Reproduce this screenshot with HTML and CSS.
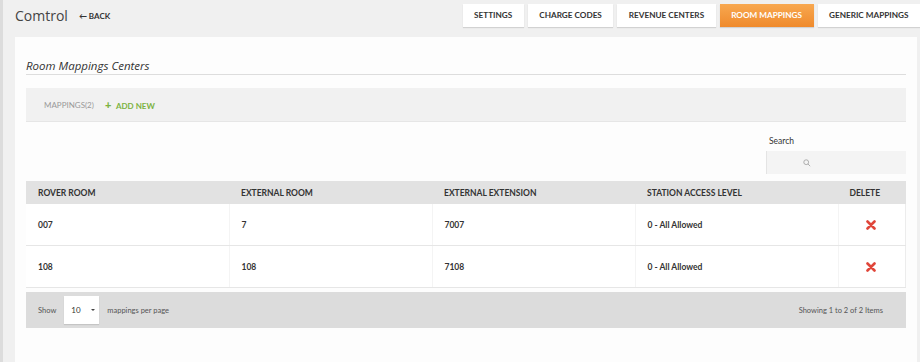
FILE: index.html
```html
<!DOCTYPE html>
<html>
  <head>
    <title>Comtrol - Room Mappings</title>
    <link rel="stylesheet" href="styles.css">
  </head>

  <body>
    <header class="topbar">
      <div class="brand">Comtrol</div>
      <a class="back" href="#">&larr; BACK</a>
      <nav class="tabs">
        <a class="tab" href="#">SETTINGS</a>
        <a class="tab" href="#">CHARGE CODES</a>
        <a class="tab" href="#">REVENUE CENTERS</a>
        <a class="tab active" href="#">ROOM MAPPINGS</a>
        <a class="tab" href="#">GENERIC MAPPINGS</a>
      </nav>
    </header>

    <main class="panel">
      <h2 class="title">Room Mappings Centers</h2>

      <div class="toolbar">
        <span class="count">MAPPINGS(2)</span>
        <a class="add" href="#"><span class="plus">+</span> ADD NEW</a>
      </div>

      <div class="search">
        <label for="q">Search</label>
        <div class="search-box">
          <svg width="8" height="8" viewBox="0 0 10 10">
            <circle cx="4" cy="4" r="3" fill="none" stroke="#aaa" stroke-width="1.2" />
            <line x1="6.3" y1="6.3" x2="9" y2="9" stroke="#aaa" stroke-width="1.2" />
          </svg>
        </div>
      </div>

      <table class="grid">
        <thead>
          <tr>
            <th>ROVER ROOM</th>
            <th>EXTERNAL ROOM</th>
            <th>EXTERNAL EXTENSION</th>
            <th>STATION ACCESS LEVEL</th>
            <th class="del">DELETE</th>
          </tr>
        </thead>
        <tbody>
          <tr>
            <td>007</td>
            <td>7</td>
            <td>7007</td>
            <td>0 - All Allowed</td>
            <td class="del">
              <svg width="10" height="10" viewBox="0 0 10 10">
                <path d="M1.5 1.5 L8.5 8.5 M8.5 1.5 L1.5 8.5" stroke="#e0463a" stroke-width="2.6" stroke-linecap="round" />
              </svg>
            </td>
          </tr>
          <tr>
            <td>108</td>
            <td>108</td>
            <td>7108</td>
            <td>0 - All Allowed</td>
            <td class="del">
              <svg width="10" height="10" viewBox="0 0 10 10">
                <path d="M1.5 1.5 L8.5 8.5 M8.5 1.5 L1.5 8.5" stroke="#e0463a" stroke-width="2.6" stroke-linecap="round" />
              </svg>
            </td>
          </tr>
        </tbody>
      </table>

      <div class="pager">
        <span>Show</span>
        <div class="select">10 <span class="caret"></span></div>
        <span>mappings per page</span>
        <span class="info">Showing 1 to 2 of 2 Items</span>
      </div>
    </main>
  </body>
</html>
```

FILE: styles.css
```css
html, body {
  height: 100%;
}
body {
  margin: 0;
  background: #f0f0f0;
  border-left: 3px solid #dcdcdc;
  font-family: Lato, "Open Sans", sans-serif;
  color: #333;
  display: flex;
  flex-direction: column;
  box-sizing: border-box;
}
a {
  text-decoration: none;
}

.topbar {
  display: flex;
  align-items: center;
  height: 34px;
  padding-left: 12px;
}
.brand {
  font-family: "Open Sans", sans-serif;
  font-size: 14px;
  color: #444;
  margin-top: -3px;
}
.back {
  margin-left: 11px;
  font-size: 8px;
  font-weight: bold;
  color: #333;
  margin-top: -2px;
}
.tabs {
  margin-left: auto;
  align-self: flex-start;
  display: flex;
  gap: 4px;
  padding-top: 4px;
}
.tab {
  display: block;
  height: 23px;
  line-height: 23px;
  padding: 0 11.5px;
  background: #fff;
  box-shadow: 0 1px 1px rgba(0, 0, 0, 0.12);
  font-size: 8.2px;
  font-weight: bold;
  color: #333;
}
.tab.active {
  background: linear-gradient(#f8a850, #ef8a2c);
  color: #fff;
}

.panel {
  flex: 1;
  margin: 3px 3px 0 12px;
  background: #fdfdfd;
  padding: 22px 11px 0;
}
.title {
  margin: 0;
  font-family: "Open Sans", sans-serif;
  font-size: 11.5px;
  font-style: italic;
  font-weight: normal;
  line-height: 14px;
  color: #333;
  padding-bottom: 1px;
  border-bottom: 1px solid #ddd;
}

.toolbar {
  margin-top: 13px;
  height: 34px;
  background: #f1f1f1;
  border-bottom: 1px solid #e6e6e6;
  box-sizing: border-box;
  display: flex;
  align-items: center;
  padding-left: 18px;
  gap: 11px;
  font-size: 8px;
}
.count {
  color: #999;
}
.add {
  color: #7cb342;
  font-weight: bold;
}
.plus {
  font-size: 11px;
  font-weight: 900;
  margin-right: 3px;
}

.search {
  margin-top: 13px;
  margin-left: auto;
  width: 140px;
}
.search label {
  display: block;
  font-size: 8.5px;
  color: #333;
  line-height: 12px;
  padding-left: 3px;
}
.search-box {
  margin-top: 4px;
  height: 23px;
  background: #f4f4f4;
  border-left: 1px solid #e4e4e4;
  display: flex;
  align-items: center;
  padding-left: 36px;
}

.grid {
  margin-top: 7px;
  width: 100%;
  border-collapse: collapse;
  font-size: 8.5px;
}
.grid th {
  background: #e2e2e2;
  height: 23px;
  text-align: left;
  padding: 0 12px;
  font-weight: bold;
  color: #333;
  width: 179px;
}
.grid td {
  height: 41px;
  padding: 0 12px;
  font-weight: bold;
  color: #333;
  background: #fff;
  border-bottom: 1px solid #e6e6e6;
  border-right: 1px solid #f4f4f4;
}
.grid td:last-child {
  border-right: 1px solid #ececec;
}
.grid th.del {
  text-align: center;
  width: auto;
  padding: 0 14px 0 0;
}
.grid td.del {
  text-align: center;
  padding: 0 2px 0 0;
}
.grid td.del svg {
  vertical-align: middle;
}

.pager {
  margin-top: 4px;
  height: 36px;
  background: #dcdcdc;
  display: flex;
  align-items: center;
  padding: 0 23px 0 12px;
  font-size: 7.5px;
  color: #555;
  gap: 8px;
}
.select {
  background: #fff;
  width: 35px;
  height: 28px;
  box-sizing: border-box;
  padding-left: 7px;
  display: flex;
  align-items: center;
  font-size: 8px;
  color: #333;
  box-shadow: 0 1px 1px rgba(0, 0, 0, 0.1);
}
.caret {
  margin-left: 10px;
  border-left: 2px solid transparent;
  border-right: 2px solid transparent;
  border-top: 2px solid #444;
}
.info {
  margin-left: auto;
}
```
